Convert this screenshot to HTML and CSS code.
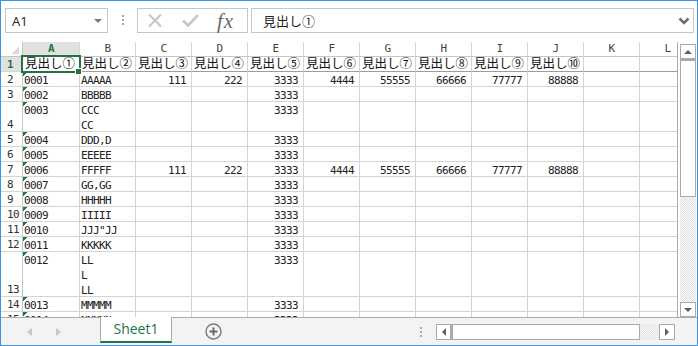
FILE: index.html
```html
<!DOCTYPE html>
<html lang="ja">
<head>
  <meta charset="UTF-8" />
  <title>Book1 - Excel</title>
  <link rel="stylesheet" href="styles.css">
</head>
<body>

  <div class="window">

    <!-- Formula bar -->
    <div class="formula-bar">
      <div class="name-box"><span>A1</span><i class="drop"></i></div>
      <div class="grip"><i></i><i></i><i></i></div>
      <div class="fx-box">
        <svg class="ico-cancel" width="14" height="13" viewBox="0 0 14 13">
          <path d="M1 0.5 L13 12.5 M13 0.5 L1 12.5" stroke="#c8c8c8" stroke-width="2.2" fill="none"/>
        </svg>
        <svg class="ico-enter" width="17" height="13" viewBox="0 0 17 13">
          <path d="M1 6.5 L6 11.5 L16 1" stroke="#c8c8c8" stroke-width="2.8" fill="none"/>
        </svg>
        <span class="fx">fx</span>
      </div>
      <div class="formula">
        <span>見出し①</span>
        <svg width="12" height="8" viewBox="0 0 12 8">
          <path d="M1.5 1.5 L6 6 L10.5 1.5" stroke="#6e6e6e" stroke-width="2.6" fill="none"/>
        </svg>
      </div>
    </div>

    <!-- Sheet -->
    <div class="sheet">
      <div class="grid" id="grid">
        <div class="sel-box"></div>
        <div class="handle"></div>
      </div>
      <div class="vscroll">
        <div class="sbtn"><i class="up"></i></div>
        <div class="vthumb"></div>
        <div class="track"></div>
        <div class="sbtn"><i class="down"></i></div>
      </div>
    </div>

    <!-- Sheet tabs -->
    <div class="tabbar">
      <div class="nav"><i class="prev"></i><i class="next"></i></div>
      <div class="tab">Sheet1</div>
      <svg class="add" width="17" height="17" viewBox="0 0 17 17">
        <circle cx="8.5" cy="8.5" r="7.5" stroke="#7a7a7a" stroke-width="1.4" fill="none"/>
        <path d="M8.5 4.5 V12.5 M4.5 8.5 H12.5" stroke="#6a6a6a" stroke-width="2"/>
      </svg>
      <div class="spacer"></div>
      <div class="grip small"><i></i><i></i><i></i></div>
      <div class="hscroll">
        <div class="sbtn"><i class="left"></i></div>
        <div class="hthumb"></div>
        <div class="track"></div>
        <div class="sbtn"><i class="right"></i></div>
      </div>
    </div>
  </div>

  <script>
    const grid = document.getElementById("grid");
    const letters = "ABCDEFGHIJKL".split("");

    const rows = [
      [1, ["見出し①","見出し②","見出し③","見出し④","見出し⑤","見出し⑥","見出し⑦","見出し⑧","見出し⑨","見出し⑩"]],
      [2, ["0001","AAAAA","111","222","3333","4444","55555","66666","77777","88888"]],
      [3, ["0002","BBBBB","","","3333"]],
      [4, ["0003","CCC\nCC","","","3333"]],
      [5, ["0004","DDD,D","","","3333"]],
      [6, ["0005","EEEEE","","","3333"]],
      [7, ["0006","FFFFF","111","222","3333","4444","55555","66666","77777","88888"]],
      [8, ["0007","GG,GG","","","3333"]],
      [9, ["0008","HHHHH","","","3333"]],
      [10, ["0009","IIIII","","","3333"]],
      [11, ["0010","JJJ\"JJ","","","3333"]],
      [12, ["0011","KKKKK","","","3333"]],
      [13, ["0012","LL\nL\nLL","","","3333"]],
      [14, ["0013","MMMMM","","","3333"]],
      [15, ["0014","NNNNN","","","3333"]]
    ];

    let html = '<div class="row head"><div class="rh corner"></div>';
    letters.forEach((l, i) => {
      html += '<div class="ch' + (i === 0 ? ' ca sel' : '') + '">' + l + '</div>';
    });
    html += '</div>';

    rows.forEach(([n, cells]) => {
      const lines = Math.max(...cells.map(c => c.split("\n").length));
      html += '<div class="row h' + lines + (n === 1 ? ' r1' : '') + '">';
      html += '<div class="rh' + (n === 1 ? ' sel' : '') + '"><span>' + n + '</span></div>';
      letters.forEach((l, i) => {
        const v = cells[i] || "";
        let cls = "cell";
        if (i === 0) cls += " ca";
        if (n === 1) cls += " jp";
        else if (i === 0 && v) cls += " err";
        else if (i > 1 && /^\d+$/.test(v)) cls += " num";
        html += '<div class="' + cls + '">' + v.replace(/\n/g, "<br>") + '</div>';
      });
      html += '</div>';
    });

    grid.insertAdjacentHTML("afterbegin", html);
  </script>
</body>
</html>
```

FILE: styles.css
```css
* { box-sizing: border-box; }
body {
  margin: 0;
  background: #fff;
}
.window {
  width: 698px;
  height: 346px;
  border: 1px solid #3a95e0;
  background: #fff;
  display: flex;
  flex-direction: column;
  overflow: hidden;
  font-family: "DejaVu Sans Mono", "Noto Sans CJK JP", monospace;
  color: #222;
}

/* formula bar */
.formula-bar {
  height: 41px;
  flex: none;
  display: flex;
  align-items: flex-start;
  padding: 7px 0 0 4px;
}
.name-box {
  width: 103px;
  height: 25px;
  border: 1px solid #c6c6c6;
  display: flex;
  align-items: center;
  justify-content: space-between;
  padding: 0 5px 0 6px;
  font: 13px "Open Sans", sans-serif;
  color: #222;
}
.drop {
  width: 0;
  height: 0;
  border-top: 4px solid #7a7a7a;
  border-left: 4px solid transparent;
  border-right: 4px solid transparent;
}
.grip {
  display: flex;
  flex-direction: column;
  gap: 2px;
  margin: 7px 0 0 14px;
}
.grip i {
  width: 2px;
  height: 2px;
  background: #a8a8a8;
}
.fx-box {
  width: 111px;
  height: 25px;
  margin-left: 13px;
  border: 1px solid #c6c6c6;
  display: flex;
  align-items: center;
  padding-left: 10px;
}
.ico-enter { margin-left: 20px; }
.fx {
  margin-left: 18px;
  font: italic 21px "Liberation Serif", serif;
  letter-spacing: 1px;
  color: #6a6a6a;
  line-height: 20px;
}
.formula {
  width: 443px;
  height: 25px;
  margin-left: 3px;
  border: 1px solid #c6c6c6;
  display: flex;
  align-items: center;
  justify-content: space-between;
  padding: 0 3px 0 11px;
  font: 13px "Noto Sans CJK JP", sans-serif;
  color: #222;
}

/* sheet */
.sheet {
  height: 275px;
  flex: none;
  display: flex;
}
.grid {
  position: relative;
  width: 677px;
  height: 275px;
  flex: none;
  overflow: hidden;
  border-right: 1px solid #ababab;
}
.row {
  display: flex;
  height: 15px;
}
.row.h2 { height: 30px; }
.row.h3 { height: 45px; }
.row > div {
  flex: none;
  width: 56px;
  border-right: 1px solid #d4d4d4;
  border-bottom: 1px solid #d4d4d4;
  font-size: 11px;
  letter-spacing: -0.6px;
  white-space: nowrap;
}
.row > .ca { width: 57px; }
.row > .rh {
  width: 22px;
  display: flex;
  align-items: flex-end;
  padding-left: 6px;
  line-height: 12px;
  color: #333;
  border-right-color: #c6c6c6;
}
.row > .ch {
  text-align: center;
  line-height: 14px;
  color: #444;
  border-bottom-color: #c6c6c6;
}
.row > .corner {
  border-bottom-color: #c6c6c6;
  background: linear-gradient(135deg, transparent 50%, #d9d9d9 50%) right 3px bottom 2px / 7px 7px no-repeat;
}
.row > .sel {
  background: #e1e1e1;
  color: #217346;
  font-weight: bold;
}
.cell {
  line-height: 15px;
  padding: 1px 5px 0 1px;
}
.cell.num { text-align: right; }
.cell.err {
  background: linear-gradient(135deg, #1f7a3a 3px, transparent 3px) 0 0 / 6px 6px no-repeat;
}
.row > .jp {
  font: 12.5px "Noto Sans CJK JP", sans-serif;
  letter-spacing: 0;
  line-height: 12px;
  padding: 0 0 0 2px;
  color: #111;
}
.r1 .cell { border-bottom-color: #9e9e9e; }

.sel-box {
  position: absolute;
  left: 20px;
  top: 13px;
  width: 60px;
  height: 18px;
  border: 2px solid #217346;
}
.handle {
  position: absolute;
  left: 74px;
  top: 26px;
  width: 7px;
  height: 7px;
  background: #217346;
  border: 1px solid #fff;
}

/* scrollbars */
.vscroll {
  width: 16px;
  margin-left: 2px;
  padding-top: 2px;
  display: flex;
  flex-direction: column;
}
.sbtn {
  width: 15px;
  height: 15px;
  flex: none;
  border: 1px solid #ababab;
  background: #fff;
  display: flex;
  align-items: center;
  justify-content: center;
}
.vscroll .sbtn { width: 16px; }
.sbtn i { width: 0; height: 0; }
.sbtn .up { border: 4px solid transparent; border-top: 0; border-bottom: 4px solid #606060; }
.sbtn .down { border: 4px solid transparent; border-bottom: 0; border-top: 4px solid #606060; }
.sbtn .left { border: 4px solid transparent; border-left: 0; border-right: 4px solid #606060; }
.sbtn .right { border: 4px solid transparent; border-right: 0; border-left: 4px solid #606060; }
.vthumb {
  height: 138px;
  flex: none;
  border: 1px solid #ababab;
  border-top-width: 2px;
  background: #fff;
}
.track {
  flex: 1;
  background: repeating-conic-gradient(#e4e4e4 0 25%, #f6f6f6 0 50%) 0 0 / 2px 2px;
}

/* tab bar */
.tabbar {
  height: 28px;
  flex: none;
  display: flex;
  align-items: center;
  border-top: 1px solid #ababab;
  background: #f3f3f3;
}
.nav {
  display: flex;
  gap: 24px;
  padding-left: 26px;
}
.nav i {
  width: 0;
  height: 0;
  border-top: 4px solid transparent;
  border-bottom: 4px solid transparent;
}
.nav .prev { border-right: 5px solid #c6c6c6; }
.nav .next { border-left: 5px solid #c6c6c6; }
.tab {
  align-self: flex-start;
  width: 72px;
  height: 26px;
  margin: -1px 0 0 39px;
  background: #fff;
  border-left: 1px solid #ababab;
  border-right: 1px solid #ababab;
  border-bottom: 2px solid #217346;
  font: 14px "Open Sans", sans-serif;
  line-height: 24px;
  text-align: center;
  color: #217346;
}
.add { margin-left: 33px; }
.spacer { flex: 1; }
.grip.small { margin: 0 14px 0 0; }
.hscroll {
  width: 239px;
  height: 16px;
  margin: 0 22px 0 0;
  display: flex;
}
.hscroll .sbtn { height: 16px; }
.hscroll .sbtn:last-child { width: 16px; }
.hthumb {
  width: 189px;
  flex: none;
  border: 1px solid #ababab;
  border-left-width: 2px;
  background: #fff;
}
```
